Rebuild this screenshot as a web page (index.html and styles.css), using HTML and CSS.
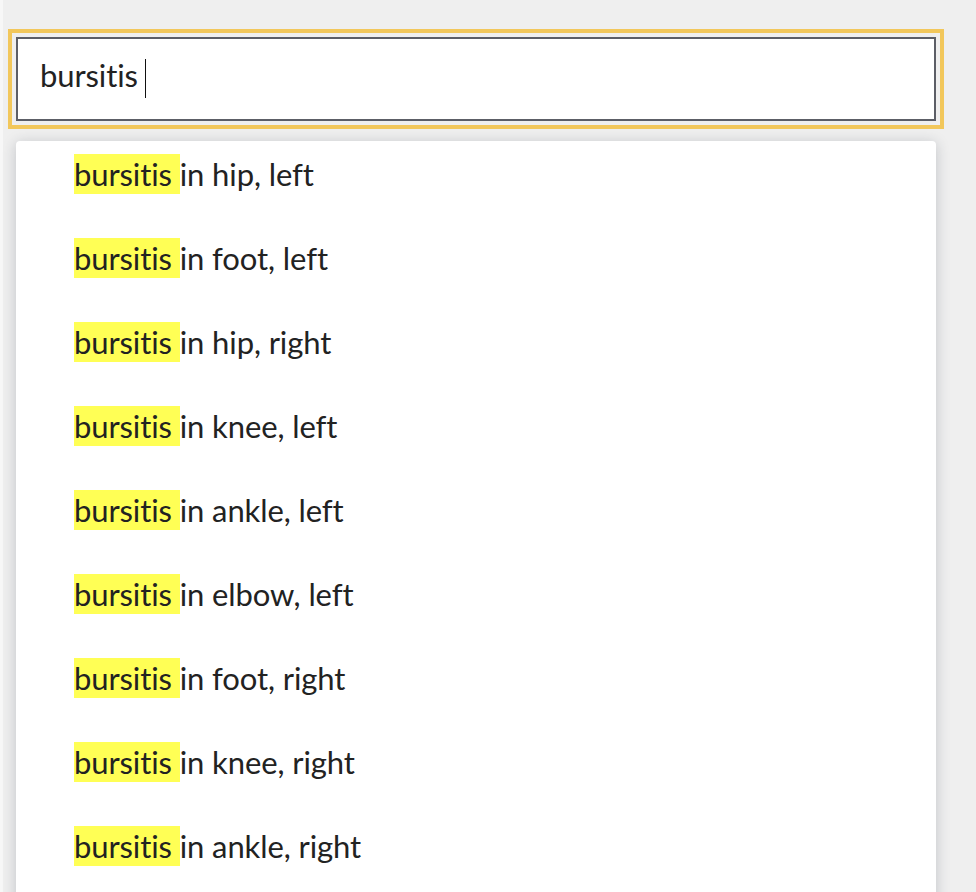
FILE: index.html
```html
<!DOCTYPE html>
<html lang="en">
<head>
<meta charset="utf-8">
<title>Search</title>
<link rel="stylesheet" href="styles.css">
</head>
<body>
<div class="page">
  <div class="search">
    <div class="field"><span class="value">bursitis</span><span class="caret"></span></div>
    <ul class="menu">
      <li class="option"><span class="hl">bursitis </span>in hip, left</li>
      <li class="option"><span class="hl">bursitis </span>in foot, left</li>
      <li class="option"><span class="hl">bursitis </span>in hip, right</li>
      <li class="option"><span class="hl">bursitis </span>in knee, left</li>
      <li class="option"><span class="hl">bursitis </span>in ankle, left</li>
      <li class="option"><span class="hl">bursitis </span>in elbow, left</li>
      <li class="option"><span class="hl">bursitis </span>in foot, right</li>
      <li class="option"><span class="hl">bursitis </span>in knee, right</li>
      <li class="option"><span class="hl">bursitis </span>in ankle, right</li>
    </ul>
  </div>
</div>
</body>
</html>
```
FILE: styles.css
```css
html, body {
  margin: 0;
  height: 100%;
}
body {
  background: #f7f7f7;
  font-family: Lato, "Open Sans", sans-serif;
  color: #222222;
  overflow: hidden;
}
.page {
  margin-left: 3px;
  min-height: 100%;
  box-sizing: border-box;
  background: #efefef;
  padding: 37px 0 0 13px;
}
.search {
  width: 920px;
}
.field {
  height: 84px;
  box-sizing: border-box;
  border: 2px solid #5c5e66;
  background: #ffffff;
  outline: 4px solid #f2c75b;
  outline-offset: 4px;
  display: flex;
  align-items: flex-start;
  padding-left: 22px;
}
.value {
  font-size: 31px;
  letter-spacing: -0.1px;
  line-height: 40px;
  margin-top: 16px;
}
.caret {
  width: 1px;
  height: 39px;
  margin-top: 20px;
  margin-left: 7px;
  background: #111111;
}
.menu {
  list-style: none;
  margin: 20px 0 0;
  padding: 13px 0 80px 58px;
  background: #ffffff;
  border-radius: 4px;
  box-shadow: 0 2px 14px rgba(30, 40, 60, 0.22);
  display: flex;
  flex-direction: column;
  gap: 44px;
}
.option {
  font-size: 31px;
  letter-spacing: -0.1px;
  line-height: 40px;
}
.hl {
  background: #ffff55;
  padding: 1px 0;
}
```
